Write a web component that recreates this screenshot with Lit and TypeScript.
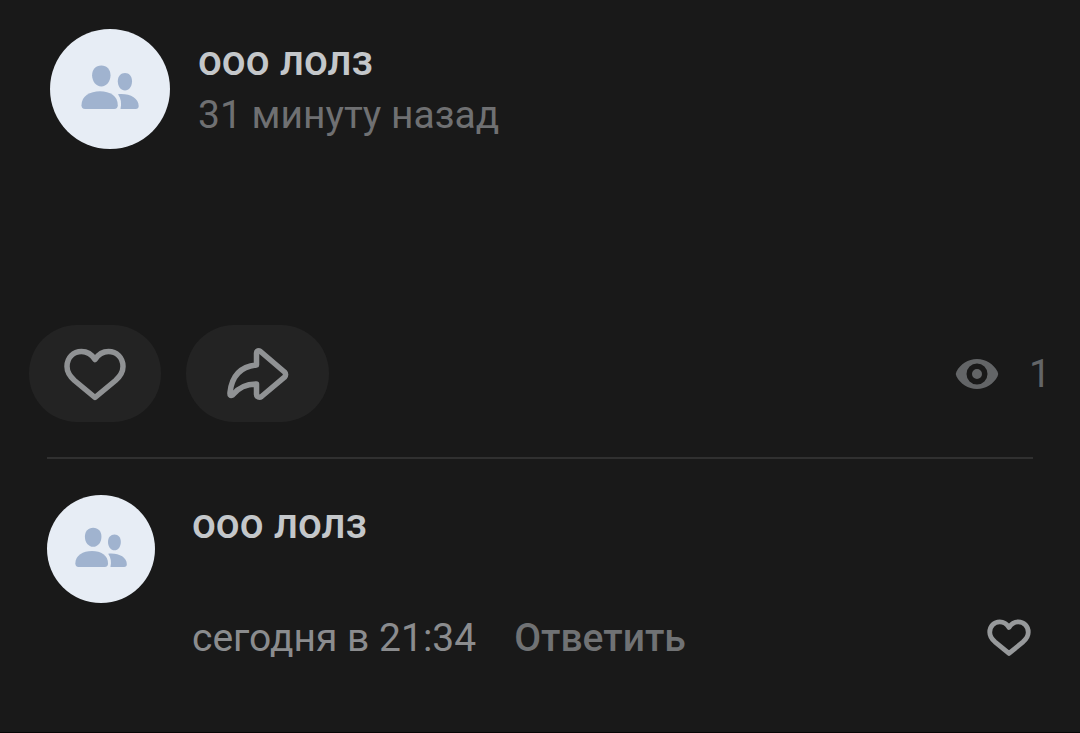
import { LitElement, html, css, svg } from "lit";
import { customElement, property, state } from "lit/decorators.js";

@customElement("community-avatar")
class CommunityAvatar extends LitElement {
  static styles = css`
    :host {
      display: block;
      flex: none;
      border-radius: 50%;
      background: #e7edf5;
      overflow: hidden;
    }
    svg {
      display: block;
      width: 100%;
      height: 100%;
    }
  `;

  render() {
    return html`<svg viewBox="0 -1 120 120" fill="#a0b3cf" aria-hidden="true">
      <path d="M51.300 35.500c5.600 0 9.200 4 9.200 9.800 0 6.200-4 11.200-9.200 11.200s-9.200-5-9.200-11.200c0-5.800 3.600-9.800 9.200-9.800z" />
      <path d="M75 43c4.200 0 7 3.200 7 8.200 0 5.200-3 9.300-7 9.300s-7.200-4-7.200-9.300c0-5 3-8.200 7.200-8.200z" />
      <path d="M35 79c-2.400 0-3.500-1.400-3.500-3.800C31.500 66 40 61.300 50 61.300S67.800 66 67.800 75.200c0 2.400-1.200 3.800-3.600 3.800z" />
      <path d="M68 64.300c11-1.200 20.700 3.500 20.700 11.700 0 2-1.100 3-3 3H70.500c1.300-5.500.5-10.500-2.500-14.700z" />
    </svg>`;
  }
}

const heart = (stroke: number) => svg`<path
  d="M32 55.500 L11.500 38.500 C6.500 34 4 30 4 24.500 C4 15.500 10.500 9.500 18.500 9.500 C24 9.500 28.500 12 32 17.500 C35.500 12 40 9.500 45.500 9.500 C53.500 9.500 60 15.500 60 24.500 C60 30 57.500 34 52.500 38.500 Z"
  fill="none" stroke="currentColor" stroke-width=${stroke} stroke-linejoin="round" />`;

@customElement("app-root")
class AppRoot extends LitElement {
  @property({ type: String }) author = "ооо лолз";
  @state() private views = 1;

  static styles = css`
    :host {
      display: flex;
      flex-direction: column;
      box-sizing: border-box;
      min-height: 100vh;
      background: #191919;
      border-bottom: 1px solid #060606;
      color: #8b8c8e;
      font: 400 39px/54px Roboto, "Noto Sans", sans-serif;
    }
    * {
      box-sizing: border-box;
    }
    h2,
    h3 {
      margin: 0;
      font-size: 42px;
      font-weight: 500;
      color: #c4c7ca;
    }
    button {
      padding: 0;
      border: 0;
      background: none;
      color: inherit;
      font: inherit;
      cursor: pointer;
    }
    svg {
      display: block;
    }
    .header {
      display: flex;
      gap: 28px;
      padding: 29px 50px 0;
    }
    .post-avatar {
      width: 120px;
      height: 120px;
    }
    .meta {
      padding-top: 5px;
    }
    .ago {
      display: block;
      color: #6f7072;
    }
    .actions {
      display: flex;
      align-items: center;
      gap: 25px;
      padding: 0 29px;
      margin-top: 176px;
    }
    .pill {
      display: flex;
      align-items: center;
      justify-content: center;
      width: 132px;
      height: 97px;
      border-radius: 48px;
      background: #232323;
      color: #909294;
    }
    .share {
      width: 143px;
    }
    .icon {
      width: 64px;
      height: 64px;
    }
    .views {
      display: flex;
      align-items: center;
      gap: 30px;
      margin-left: auto;
      color: #636567;
    }
    .eye {
      width: 44px;
      height: 32px;
    }
    .divider {
      height: 2px;
      margin: 35px 47px 0;
      border: 0;
      background: #303030;
    }
    .comment {
      display: flex;
      gap: 37px;
      padding: 36px 49px 0 47px;
    }
    .comment-avatar {
      width: 108px;
      height: 108px;
    }
    .body {
      flex: 1;
      padding-top: 2px;
    }
    .footer {
      display: flex;
      align-items: center;
      gap: 38px;
      margin-top: 60px;
    }
    .reply {
      font-weight: 500;
      color: #707274;
    }
    .like {
      margin-left: auto;
      color: #97999b;
    }
    .small {
      width: 44px;
      height: 44px;
    }
  `;

  render() {
    return html`
      <article>
        <header class="header">
          <community-avatar class="post-avatar"></community-avatar>
          <div class="meta">
            <h2>${this.author}</h2>
            <time class="ago">31 минуту назад</time>
          </div>
        </header>
        <div class="actions">
          <button class="pill" aria-label="Нравится">
            <svg class="icon" viewBox="0 0 64 64">${heart(5.5)}</svg>
          </button>
          <button class="pill share" aria-label="Поделиться">
            <svg class="icon" viewBox="0 0 64 64" fill="none" stroke="currentColor" stroke-width="5.500" stroke-linejoin="round">
              <path d="M30.500 11 C30.500 9 33 8 34.500 9.500 L58.500 30 C60 31.500 60 33.700 58.500 35.200 L35.500 54.500 C33.500 56 30.500 55 30.500 52.500 V42 C20.500 42 12.500 45.500 6.500 53 C4.500 54 3.700 53 4 50.500 C6 33 15 24.500 30.500 23 Z" />
            </svg>
          </button>
          <div class="views" aria-label="Просмотры">
            <svg class="eye" viewBox="0 0 44 32" aria-hidden="true">
              <path
                fill="currentColor"
                fill-rule="evenodd"
                d="M22 1C31 1 38.500 6 42.500 13.500Q44 16 42.500 18.500C38.500 26 31 31 22 31S5.500 26 1.500 18.500Q0 16 1.500 13.500C5.500 6 13 1 22 1zM22 5.500a10.500 10.500 0 1 0 0 21 10.500 10.500 0 0 0 0-21zM22 11a5 5 0 1 1 0 10 5 5 0 0 1 0-10z"
              />
            </svg>
            <span>${this.views}</span>
          </div>
        </div>
      </article>
      <hr class="divider" />
      <section class="comment">
        <community-avatar class="comment-avatar"></community-avatar>
        <div class="body">
          <h3>${this.author}</h3>
          <div class="footer">
            <time>сегодня в 21:34</time>
            <button class="reply">Ответить</button>
            <button class="like" aria-label="Нравится">
              <svg class="small" viewBox="0 1 64 64">${heart(7)}</svg>
            </button>
          </div>
        </div>
      </section>
    `;
  }
}
